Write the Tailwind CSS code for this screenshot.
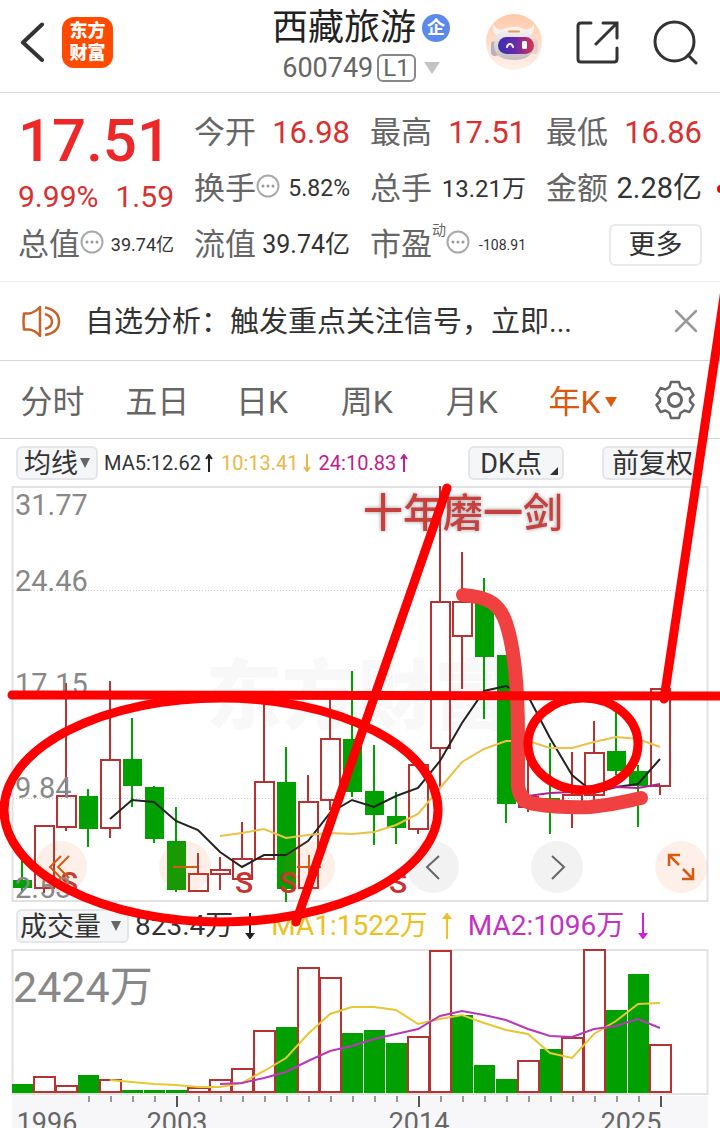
<!DOCTYPE html>
<html lang="zh-CN">
<head>
  <meta charset="UTF-8" />
  <meta name="viewport" content="width=device-width, initial-scale=1.0" />
  <title>西藏旅游 600749</title>
  <script src="https://cdn.jsdelivr.net/npm/@tailwindcss/browser@4"></script>
</head>
<body class="relative bg-white text-[#333] overflow-x-hidden font-[Roboto,'Noto_Sans_CJK_SC',sans-serif]">

  <!-- Header -->
  <header class="flex items-center h-[93px] pl-5 pr-[22px] pb-2 border-b border-[#dcdfe0]">
    <button aria-label="返回">
      <svg class="w-6 h-10" viewBox="0 0 24 40" fill="none" stroke="#333" stroke-width="4" stroke-linecap="round" stroke-linejoin="round"><path d="M22 2.500 3 20.500 22 38" /></svg>
    </button>
    <a href="#" class="ml-[18px] w-[51px] h-[51px] rounded-xl bg-[#ff4a00] text-white text-lg leading-[22px] font-black flex flex-col items-center justify-center"><span>东方</span><span>财富</span></a>

    <div class="ml-auto mr-9 flex flex-col items-center pt-2">
      <h1 class="flex items-center gap-1.5 text-4xl leading-[44px] text-[#222]">西藏旅游
        <span class="w-7 h-7 rounded-full bg-[#5b8aea] text-white text-lg leading-7 font-bold text-center">企</span>
      </h1>
      <button class="flex items-center text-[27px] leading-9 text-[#666]">600749
        <span class="ml-1 px-1 border-2 border-[#888] rounded-md text-2xl leading-6">L1</span>
        <svg class="ml-2 w-4 h-3" viewBox="0 0 16 12" fill="#c4c4c4"><path d="M0 0h16l-8 12z" /></svg>
      </button>
    </div>

    <div class="flex items-center gap-[34px]">
      <button aria-label="智能助手">
        <svg class="w-14 h-14" viewBox="0 0 56 56">
          <defs>
            <linearGradient id="halo" x1="0" y1="0" x2="0" y2="1"><stop offset="0" stop-color="#ffc9a8" /><stop offset="1" stop-color="#fff1ea" /></linearGradient>
            <linearGradient id="shell" x1="0" y1="0" x2="0" y2="1"><stop offset="0" stop-color="#faf7f6" /><stop offset="1" stop-color="#c4bbc2" /></linearGradient>
            <linearGradient id="visor" x1="0" y1="0" x2="1" y2="0"><stop offset="0" stop-color="#3a2fb0" /><stop offset=".5" stop-color="#6a2ba8" /><stop offset="1" stop-color="#e0324a" /></linearGradient>
          </defs>
          <circle cx="28" cy="28" r="28" fill="url(#halo)" />
          <path d="M7 11c-1 6 1 10 6 11l5-6c-5 0-8-2-11-5zM48 10c1 6-1 10-5 12l-5-6c5 0 8-2 10-6z" fill="#f7f1f0" />
          <rect x="5" y="27" width="8" height="15" rx="4" fill="#b9afb8" />
          <rect x="44" y="25" width="8" height="15" rx="4" fill="#dcd2d6" />
          <path d="M28 13c12 0 20 7 20 18 0 9-7 15-20 15S8 41 8 31c0-11 8-18 20-18z" fill="url(#shell)" />
          <rect x="12" y="23" width="36" height="17" rx="8.500" fill="url(#visor)" />
          <path d="M23 17.500h10" stroke="#e59a55" stroke-width="2" stroke-linecap="round" />
          <path d="M21 33c1-4 5-4 6 0" fill="none" stroke="#fff" stroke-width="2" stroke-linecap="round" />
          <rect x="36" y="27" width="5" height="8" rx="1.500" fill="#fff" />
        </svg>
      </button>
      <button aria-label="分享">
        <svg class="w-[43px] h-[43px]" viewBox="0 0 43 43" fill="none" stroke="#333" stroke-width="3" stroke-linecap="round"><path d="M15 2H5Q2 2 2 5v33q0 3 3 3h33q3 0 3-3V27M27 2h14v15M41 2 20 23" /></svg>
      </button>
      <button aria-label="搜索">
        <svg class="w-[45px] h-[45px]" viewBox="0 0 45 45" fill="none" stroke="#333" stroke-width="3" stroke-linecap="round"><circle cx="21.500" cy="21.500" r="19.500" /><path d="m35 35 8 8" /></svg>
      </button>
    </div>
  </header>

  <!-- Quote -->
  <section class="grid grid-cols-4 gap-x-5 pl-[18px] pr-[18px] pt-3 h-[189px] content-start border-b border-[#ececec] whitespace-nowrap text-[#666]">
    <div class="flex flex-col row-span-2 text-[#d93030]">
      <strong class="h-[72px] text-[60px] leading-[72px] font-medium text-[#ee2828]">17.51</strong>
      <div class="flex justify-between text-[30px] leading-10">
        <span>9.99%</span><span>1.59</span>
      </div>
    </div>
    <div class="flex items-center justify-between h-14 text-[31px]">今开<span class="text-[31px] text-[#d93030]">16.98</span></div>
    <div class="flex items-center justify-between h-14 text-[31px]">最高<span class="text-[31px] text-[#d93030]">17.51</span></div>
    <div class="flex items-center justify-between h-14 text-[31px]">最低<span class="text-[31px] text-[#d93030]">16.86</span></div>

    <div class="flex items-center justify-between h-14 text-[31px]">
      <span class="flex items-center">换手
        <svg class="w-6 h-6 mb-1.5" viewBox="0 0 24 24" fill="#999"><circle cx="12" cy="12" r="10.500" fill="none" stroke="#aaa" stroke-width="2" /><circle cx="7" cy="12" r="1.500" /><circle cx="12" cy="12" r="1.500" /><circle cx="17" cy="12" r="1.500" /></svg>
      </span>
      <span class="text-[23px] text-[#333]">5.82%</span>
    </div>
    <div class="flex items-center justify-between h-14 text-[31px]">总手<span class="text-2xl text-[#333]">13.21万</span></div>
    <div class="flex items-center justify-between h-14 text-[31px]">金额<span class="text-[29px] text-[#333]">2.28亿</span></div>

    <div class="flex items-center justify-between h-14 text-[31px]">
      <span class="flex items-center">总值
        <svg class="w-6 h-6 mb-1.5" viewBox="0 0 24 24" fill="#999"><circle cx="12" cy="12" r="10.500" fill="none" stroke="#aaa" stroke-width="2" /><circle cx="7" cy="12" r="1.500" /><circle cx="12" cy="12" r="1.500" /><circle cx="17" cy="12" r="1.500" /></svg>
      </span>
      <span class="text-lg text-[#333]">39.74亿</span>
    </div>
    <div class="flex items-center justify-between h-14 text-[31px]">流值<span class="text-[25px] text-[#333]">39.74亿</span></div>
    <div class="flex items-center justify-between h-14 text-[31px]">
      <span class="flex items-center">市盈<sup class="text-sm leading-4 mb-4">动</sup>
        <svg class="w-6 h-6 mb-1.5" viewBox="0 0 24 24" fill="#999"><circle cx="12" cy="12" r="10.500" fill="none" stroke="#aaa" stroke-width="2" /><circle cx="7" cy="12" r="1.500" /><circle cx="12" cy="12" r="1.500" /><circle cx="17" cy="12" r="1.500" /></svg>
      </span>
      <span class="text-sm text-[#333]">-108.91</span>
    </div>
    <div class="flex items-center justify-end h-14">
      <button class="w-[93px] h-[42px] rounded-md border-2 border-[#e8e9ea] text-[27px] leading-9 text-[#333]">更多</button>
    </div>
  </section>

  <!-- Notice -->
  <section class="flex items-center h-[79px] pl-[22px] pr-[22px] border-b border-[#d6d6d6]">
    <svg class="w-[39px] h-8" viewBox="0 0 39 32" fill="none" stroke="#c8622a" stroke-width="2.500" stroke-linejoin="round"><path d="M2 8.500h5q6-1 11-6.500v29q-5-6-11-6.500H2Q1 16 2 8.500zM23 9q7 2 7 7.500T23 24M23 2.500q14 3 14 14T23 30" /></svg>
    <p class="flex-1 ml-6 pt-1 text-[29px] whitespace-nowrap">自选分析：触发重点关注信号，立即...</p>
    <button aria-label="关闭">
      <svg class="w-6 h-6" viewBox="0 0 24 24" stroke="#999" stroke-width="2.500" stroke-linecap="round"><path d="m2 2 20 20M22 2 2 22" /></svg>
    </button>
  </section>

  <!-- Period tabs -->
  <nav class="flex items-center h-[78px] border-b border-[#d6d6d6] text-[32px] text-[#666] whitespace-nowrap">
    <div class="flex-1 grid grid-cols-6 pt-1">
      <button>分时</button>
      <button>五日</button>
      <button>日K</button>
      <button>周K</button>
      <button>月K</button>
      <button class="flex items-center justify-center gap-1 pl-3 text-[#d8590f]">年K<svg class="w-3 h-2.5" viewBox="0 0 12 10" fill="#e0580a"><path d="M0 0h12l-6 10z" /></svg></button>
    </div>
    <button aria-label="设置" class="w-[91px] flex justify-center">
      <svg class="w-10 h-10" viewBox="0 0 40 40" fill="none" stroke="#666" stroke-width="2.500" stroke-linejoin="round"><path d="M16 2h8l1.500 5 4 2.500 5-1.500 4 7-3.500 3.500v3L38.500 25l-4 7-5-1.500-4 2.500-1.500 5h-8l-1.500-5-4-2.500-5 1.500-4-7L5 21.500v-3L1.500 15l4-7 5 1.500 4-2.500z" /><circle cx="20" cy="20" r="6.500" stroke-width="3" /></svg>
    </button>
  </nav>

  <!-- Moving averages -->
  <div class="flex items-center h-[47px] pl-4 pr-[17px] whitespace-nowrap text-xl">
    <button class="flex items-center h-[34px] px-1.5 pt-1 border-2 border-[#e4e6e9] rounded-md bg-[#f5f6f8] text-[27px]">均线<svg class="w-2.5 h-2.5 ml-0.5 mb-1" viewBox="0 0 10 10" fill="#666"><path d="M0 0h10l-5 10z" /></svg></button>
    <span class="ml-1.5">MA5:12.62</span>
    <svg class="w-2 h-[18px] ml-1" viewBox="0 0 8 18" fill="none" stroke="#222" stroke-width="2"><path d="M4 18V1M1 5l3-4 3 4" /></svg>
    <span class="ml-2 text-[#eab84a]">10:13.41</span>
    <svg class="w-2 h-[18px] ml-1" viewBox="0 0 8 18" fill="none" stroke="#eab84a" stroke-width="2"><path d="M4 0v17M1 13l3 4 3-4" /></svg>
    <span class="ml-2 text-[#c0208c]">24:10.83</span>
    <svg class="w-2 h-[18px] ml-1" viewBox="0 0 8 18" fill="none" stroke="#c0208c" stroke-width="2"><path d="M4 18V1M1 5l3-4 3 4" /></svg>
    <button class="flex items-center h-[34px] ml-auto pl-2.5 pr-1 pt-1 border-2 border-[#e4e6e9] rounded-md bg-[#f5f6f8] text-[27px]">DK点<svg class="w-2 h-2 ml-2 mt-3" viewBox="0 0 8 8" fill="#333"><path d="M8 0v8H0z" /></svg></button>
    <button class="flex items-center h-[34px] ml-[38px] px-2 pt-1 border-2 border-[#e4e6e9] rounded-md bg-[#f5f6f8] text-[27px]">前复权</button>
  </div>

  <!-- Candles -->
  <section class="relative">
    <svg class="block w-full" viewBox="0 486 720 416" font-size="29">
      <text x="206" y="723" font-size="76" font-weight="900" fill="#f8f8f8">东方财富</text>
      <rect x="12.500" y="487" width="695" height="414" fill="none" stroke="#e2e2e2" stroke-width="2" />
      <path d="M13 590.500H707M13 694.500H707M13 798.500H707" stroke="#ccc" stroke-dasharray="1 2" />
      <g id="candles" stroke-width="2"></g>
      <g fill="none" stroke-width="2">
        <polyline id="ma5" stroke="#222" />
        <polyline id="ma10" stroke="#eec04a" />
        <polyline id="ma24" stroke="#b02090" />
      </g>
      <g fill="#c83232" font-size="30" font-weight="500" text-anchor="middle">
        <text x="69" y="893">S</text><text x="244" y="893">S</text><text x="288" y="893">S</text><text x="398" y="893">S</text>
      </g>
      <g fill="#888">
        <text x="15" y="515">31.77</text><text x="15" y="591">24.46</text><text x="15" y="694">17.15</text><text x="15" y="798">9.84</text><text x="15" y="898">2.53</text>
      </g>
    </svg>
    <div class="absolute inset-x-0 bottom-[9px] flex justify-between pl-[35px] pr-[13px]">
      <button aria-label="最早" class="w-[52px] h-[52px] rounded-full bg-[#f56a20]/10"><svg viewBox="0 0 52 52" fill="none" stroke="#d8590f" stroke-width="2"><path d="M26 15 15 26l11 11M34 15 23 26l11 11" /></svg></button>
      <button aria-label="缩小" class="w-[52px] h-[52px] rounded-full bg-[#f56a20]/10"><svg viewBox="0 0 52 52" fill="none" stroke="#d8590f" stroke-width="2"><path d="M14 26h24" /></svg></button>
      <button aria-label="放大" class="w-[52px] h-[52px] rounded-full bg-[#f56a20]/10"><svg viewBox="0 0 52 52" fill="none" stroke="#d8590f" stroke-width="2"><path d="M14 26h24M26 14v24" /></svg></button>
      <button aria-label="向前" class="w-[52px] h-[52px] rounded-full bg-black/5"><svg viewBox="0 0 52 52" fill="none" stroke="#666" stroke-width="2"><path d="M32 15 20 26l12 12" /></svg></button>
      <button aria-label="向后" class="w-[52px] h-[52px] rounded-full bg-black/5"><svg viewBox="0 0 52 52" fill="none" stroke="#666" stroke-width="2"><path d="m21 15 12 11-12 12" /></svg></button>
      <button aria-label="全屏" class="w-[52px] h-[52px] rounded-full bg-[#f56a20]/10"><svg viewBox="0 0 52 52" fill="none" stroke="#d8590f" stroke-width="2.500"><path d="M14 25V14h11M14 14l10 10M38 27v11H27M38 38 28 28" /></svg></button>
    </div>
  </section>

  <!-- Volume figures -->
  <div class="flex items-center h-[47px] pl-4 whitespace-nowrap text-[28px]">
    <button class="flex items-center h-[34px] pl-0.5 pr-1.5 pt-1 border-2 border-[#e4e6e9] rounded-md bg-[#f5f6f8] text-[27px]">成交量<svg class="w-2.5 h-2.5 ml-2.5 mb-1" viewBox="0 0 10 10" fill="#666"><path d="M0 0h10l-5 10z" /></svg></button>
    <span class="ml-1.5">823.4万</span>
    <svg class="w-2.5 h-[26px] ml-3" viewBox="0 0 10 26" stroke="#222" fill="#222" stroke-width="2"><path d="M5 0v24" /><path d="m2 21 3 4 3-4z" /></svg>
    <span class="ml-4 text-[#eec020]">MA1:1522万</span>
    <svg class="w-2.5 h-[26px] ml-3.5" viewBox="0 0 10 26" stroke="#eec020" fill="#eec020" stroke-width="2"><path d="M5 26V2" /><path d="m2 5 3-4 3 4z" /></svg>
    <span class="ml-4 text-[#c432c4]">MA2:1096万</span>
    <svg class="w-2.5 h-[26px] ml-3.5" viewBox="0 0 10 26" stroke="#d020d8" fill="#d020d8" stroke-width="2"><path d="M5 0v24" /><path d="m2 21 3 4 3-4z" /></svg>
  </div>

  <!-- Volume bars and years -->
  <svg class="block w-full" viewBox="0 949 720 179">
    <rect x="12.500" y="950" width="695" height="144" fill="none" stroke="#e2e2e2" stroke-width="2" />
    <rect x="12" y="1096" width="696" height="32" fill="#f7f7fa" />
    <text x="13" y="1002" font-size="43" fill="#888">2424万</text>
    <g id="bars" stroke-width="2"></g>
    <g fill="none" stroke-width="2">
      <polyline id="vol1" stroke="#e6c832" />
      <polyline id="vol2" stroke="#b838b8" />
    </g>
    <g id="ticks" stroke="#999" stroke-width="2"></g>
    <g font-size="27" fill="#666" text-anchor="middle">
      <text x="47" y="1132">1996</text><text x="177" y="1132">2003</text><text x="419" y="1132">2014</text><text x="631" y="1132">2025</text>
    </g>
  </svg>

  <!-- Hand-drawn marks over the page -->
  <svg class="absolute inset-x-0 top-0 w-full pointer-events-none" viewBox="0 0 720 1128" fill="none" stroke-linecap="round">
    <text x="363" y="527" font-size="40" font-weight="500" fill="#c8403e" class="drop-shadow-[0_0_2px_#999]">十年磨一剑</text>
    <path d="M463 595C490 597 500 605 506 623C515 650 518 690 518 737V785Q519 802 535 804Q560 808 590 807Q612 805 641 798" stroke="#f04040" stroke-width="14" />
    <g stroke="#f00" stroke-width="9">
      <ellipse cx="221" cy="810" rx="217" ry="112" />
      <ellipse cx="583" cy="744" rx="55" ry="46" />
      <path d="M12 695 725 696" />
      <path d="M447 488 296 922" />
      <path d="M725 290 664 699" />
    </g>
    <circle cx="721" cy="189" r="4" fill="#f00" />
  </svg>

  <script>
    const X0 = 22, STEP = 22;
    const GREEN = "#00a000", RED = "#b83232";

    // [direction, high, body top, body bottom, low]
    const candles = [
      ["g", 858, 880, 888, 891], ["r", 825, 826, 888, 893], ["r", 683, 796, 827, 831], ["g", 789, 796, 829, 847],
      ["r", 681, 760, 828, 838], ["g", 718, 759, 786, 807], ["g", 786, 787, 839, 843], ["g", 807, 841, 890, 892],
      ["r", 853, 874, 891, 891], ["r", 857, 870, 874, 890], ["r", 822, 859, 879, 879], ["r", 700, 782, 859, 859],
      ["g", 747, 782, 889, 902], ["r", 775, 802, 888, 889], ["r", 698, 739, 800, 810], ["g", 671, 739, 792, 797],
      ["g", 745, 791, 815, 845], ["g", 792, 816, 828, 844], ["r", 765, 765, 829, 834], ["r", 486, 602, 748, 787],
      ["r", 552, 602, 636, 689], ["g", 578, 600, 657, 719], ["g", 655, 655, 804, 823], ["r", 745, 797, 807, 812],
      ["g", 743, 798, 806, 834], ["r", 752, 795, 806, 828], ["r", 721, 753, 795, 802], ["g", 708, 751, 771, 775],
      ["g", 765, 771, 786, 827], ["r", 689, 689, 786, 795]
    ];

    const volumes = [1084, 1077, 1086, 1075, 1080, 1090, 1090, 1090, 1088, 1080, 1069, 1031, 1027, 968, 978,
      1033, 1030, 1043, 1037, 951, 1015, 1065, 1079, 1061, 1049, 1038, 950, 1010, 974, 1045];
    const volumeDirs = "grrgrgggrrrrgrrgggrrgggrgrrggr";

    document.getElementById("candles").innerHTML = candles.map(([dir, high, top, bottom, low], i) => {
      const x = X0 + STEP * i;
      if (dir === "g") {
        return `<path d="M${x} ${high}V${low}" stroke="${GREEN}" /><rect x="${x - 9}" y="${top}" width="19" height="${bottom - top}" fill="${GREEN}" />`;
      }
      return `<path d="M${x} ${high}V${top}M${x} ${bottom}V${low}" stroke="${RED}" /><rect x="${x - 9}" y="${top}" width="19" height="${bottom - top}" fill="none" stroke="${RED}" />`;
    }).join("");

    document.getElementById("bars").innerHTML = volumes.map((top, i) => {
      const x = X0 + STEP * i;
      if (volumeDirs[i] === "g") {
        return `<rect x="${x - 10}" y="${top}" width="21" height="${1093 - top}" fill="${GREEN}" />`;
      }
      return `<rect x="${x - 10}" y="${top}" width="21" height="${1092 - top}" fill="#fff" stroke="${RED}" />`;
    }).join("");

    function drawLine(id, start, ys) {
      document.getElementById(id).setAttribute("points", ys.map((y, i) => `${X0 + STEP * (start + i)},${y}`).join(" "));
    }
    drawLine("ma5", 4, [819, 800, 802, 821, 830, 852, 867, 855, 855, 841, 813, 800, 807, 796, 788, 761, 723, 691, 686, 696, 738, 775, 793, 787, 784, 759]);
    drawLine("ma10", 9, [836, 833, 829, 838, 835, 833, 834, 832, 825, 814, 788, 762, 749, 741, 741, 748, 748, 742, 737, 739, 747]);
    drawLine("ma24", 23, [796, 793, 792, 790, 787, 788, 784]);
    drawLine("vol1", 4, [1080, 1082, 1084, 1085, 1087, 1087, 1083, 1071, 1058, 1034, 1014, 1007, 1007, 1010, 1024, 1019, 1015, 1023, 1030, 1034, 1053, 1058, 1034, 1021, 1004, 1003]);
    drawLine("vol2", 9, [1084, 1083, 1078, 1072, 1061, 1051, 1046, 1039, 1034, 1029, 1016, 1011, 1015, 1020, 1029, 1036, 1037, 1029, 1026, 1019, 1028]);

    // Long tick every eleven years
    let ticks = "";
    for (let i = 3; i < 30; i++) {
      const x = X0 + STEP * i + 1;
      ticks += i % 11 === 7 ? `<path d="M${x} 1096v11" stroke="#555" />` : `<path d="M${x} 1096v6" />`;
    }
    document.getElementById("ticks").innerHTML = ticks;
  </script>
</body>
</html>
